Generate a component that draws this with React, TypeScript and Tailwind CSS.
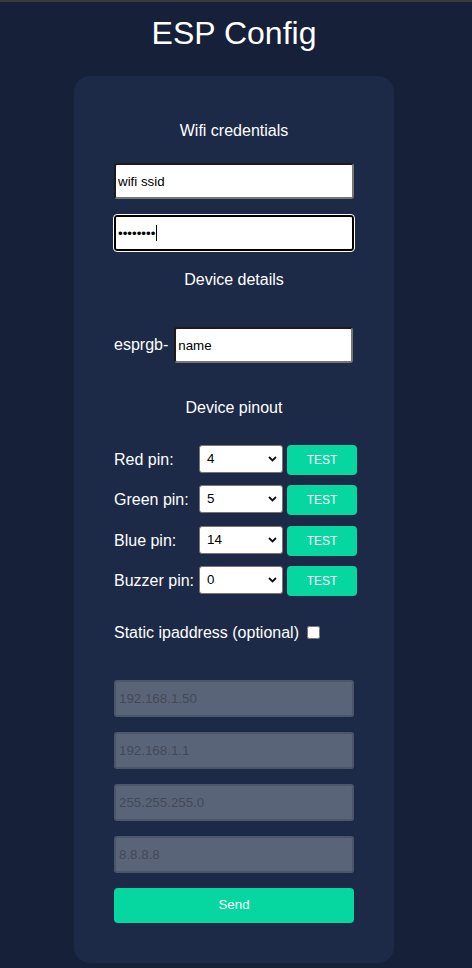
import { useState } from "react";

const pins = [
  { label: "Red pin:", value: "4" },
  { label: "Green pin:", value: "5" },
  { label: "Blue pin:", value: "14" },
  { label: "Buzzer pin:", value: "0" },
];

const gpio = ["0", "1", "2", "3", "4", "5", "12", "13", "14", "15", "16"];

const ipFields = ["192.168.1.50", "192.168.1.1", "255.255.255.0", "8.8.8.8"];

const inset =
  "border-2 border-t-[#1b1b1b] border-l-[#1b1b1b] border-b-[#767676] border-r-[#767676] rounded-[3px] bg-white";

function Chevron() {
  return (
    <svg width="9" height="6" viewBox="0 0 9 6" className="pointer-events-none absolute right-[6px] top-[11px]" aria-hidden>
      <path d="M1 1l3.5 3.5L8 1" fill="none" stroke="#111" strokeWidth="1.8" />
    </svg>
  );
}

export default function App() {
  const [ssid, setSsid] = useState("wifi ssid");
  const [pass, setPass] = useState("12345678");
  const [name, setName] = useState("name");
  const [values, setValues] = useState(pins.map((p) => p.value));
  const [staticIp, setStaticIp] = useState(false);

  return (
    <div className="min-h-[968px] bg-[#162038] text-white font-['Liberation_Sans',Arial,sans-serif]">
      <div className="h-[2px] bg-[#3a3b3f]" />
      <div className="w-[468px]">
        <h1 className="mt-[13px] text-center text-[32px] leading-[37px]">ESP Config</h1>

        <form
          className="mx-auto mt-[24px] flex w-[320px] flex-col rounded-[16px] bg-[#1c2a48] px-[40px] pt-[46px] pb-[40px]"
          onSubmit={(e) => e.preventDefault()}
        >
          <h3 className="text-center text-[16px] leading-[18px]">Wifi credentials</h3>
          <input
            value={ssid}
            onChange={(e) => setSsid(e.target.value)}
            className={`mt-[23px] h-[36px] w-[240px] px-[2px] text-[13.33px] text-black outline-none ${inset}`}
          />
          <div className="relative mt-[16px]">
            <input
              type="password"
              value={pass}
              onChange={(e) => setPass(e.target.value)}
              className="h-[36px] w-[240px] rounded-[3px] border-2 border-black bg-white px-[2px] text-[13.33px] text-black outline outline-1 outline-offset-0 outline-white"
            />
            <span className="pointer-events-none absolute left-[42px] top-[10px] h-[16px] w-px bg-black" />
          </div>

          <h3 className="mt-[20px] text-center text-[16px] leading-[18px]">Device details</h3>
          <div className="mt-[38px] flex h-[36px] items-center gap-[6px]">
            <span className="shrink-0 text-[16px]">esprgb-</span>
            <input
              value={name}
              onChange={(e) => setName(e.target.value)}
              className={`h-[36px] w-[179px] shrink-0 px-[2px] text-[13.33px] text-black outline-none ${inset}`}
            />
          </div>

          <h3 className="mt-[36px] text-center text-[16px] leading-[18px]">Device pinout</h3>
          <div className="mt-[28px] flex flex-col gap-[10.3px]">
            {pins.map((p, i) => (
              <div key={p.label} className="flex h-[30px] items-start">
                <span className="w-[85px] shrink-0 self-center text-[16px]">{p.label}</span>
                <div className="relative shrink-0">
                  <select
                    value={values[i]}
                    onChange={(e) => setValues(values.map((v, j) => (j === i ? e.target.value : v)))}
                    className="h-[28px] w-[84px] appearance-none rounded-[3px] border border-[#767676] bg-white pl-[7px] text-[13.33px] text-black outline-none"
                  >
                    {gpio.map((g) => (
                      <option key={g} value={g}>
                        {g}
                      </option>
                    ))}
                  </select>
                  <Chevron />
                </div>
                <button
                  type="button"
                  className="ml-[4px] h-[30px] w-[70px] shrink-0 rounded-[4px] bg-[#06d6a0] text-[12px] text-white"
                >
                  TEST
                </button>
              </div>
            ))}
          </div>

          <label className="mt-[28px] flex h-[18px] items-center text-[16px] leading-[18px]">
            Static ipaddress (optional)
            <input
              type="checkbox"
              checked={staticIp}
              onChange={(e) => setStaticIp(e.target.checked)}
              className="ml-[8px] size-[13px]"
            />
          </label>

          <div className="mt-[38px] flex flex-col gap-[15px]">
            {ipFields.map((ip) => (
              <input
                key={ip}
                disabled={!staticIp}
                placeholder={ip}
                className="h-[37px] w-[240px] rounded-[3px] border-2 border-[#4d5568] bg-[#5a6479] px-[3px] text-[13.33px] text-black placeholder:text-[#434957] outline-none"
              />
            ))}
          </div>

          <button type="submit" className="mt-[15px] h-[35px] w-[240px] rounded-[4px] bg-[#06d6a0] text-[13.33px] text-white">
            Send
          </button>
        </form>
      </div>
    </div>
  );
}
